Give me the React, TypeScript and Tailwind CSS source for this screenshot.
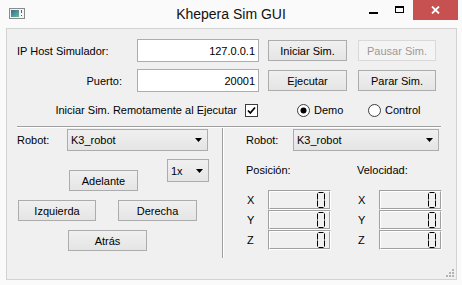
import React from 'react';

const Button = ({ label, w, disabled }: { label: string; w: string; disabled?: boolean }) => (
  <div
    className={`${w} h-[21px] shrink-0 flex items-center justify-center border ${
      disabled
        ? 'border-[#d9d9d9] bg-[#f4f4f4] text-[#9a9a9a]'
        : 'border-[#acacac] bg-linear-to-b from-[#f0f0f0] to-[#e5e5e5] text-black'
    }`}
  >
    {label}
  </div>
);

const TextInput = ({ value }: { value: string }) => (
  <div className="w-[122px] h-[23px] shrink-0 border border-[#abadb3] bg-white flex items-center justify-end pr-[3px]">
    {value}
  </div>
);

const Combo = ({ text, w, h }: { text: string; w: string; h: string }) => (
  <div
    className={`${w} ${h} shrink-0 border border-[#acacac] bg-linear-to-b from-[#f0f0f0] to-[#e5e5e5] flex items-center justify-between pl-[3px] pr-[5px]`}
  >
    <span>{text}</span>
    <svg width="7" height="4" viewBox="0 0 7 4">
      <path d="M0 0H7L3.5 4Z" fill="#000" />
    </svg>
  </div>
);

const Radio = ({ checked }: { checked?: boolean }) => (
  <svg width="13" height="13" viewBox="0 0 13 13">
    <circle cx="6.5" cy="6.5" r="6" fill="#fff" stroke="#3c3c3c" />
    {checked && <circle cx="6.5" cy="6.5" r="3" fill="#000" />}
  </svg>
);

// outline-segment "0" like QLCDNumber draws it
const LcdZero = () => (
  <svg width="8" height="16" viewBox="0 0 8 16" fill="none" stroke="#000" strokeWidth="1">
    <path d="M1.5 0.5H6.5" />
    <path d="M0.5 1.5V7.5M0.5 8.5V14.5" />
    <path d="M7.5 1.5V7.5M7.5 8.5V14.5" />
    <path d="M1.5 15.5H6.5" />
  </svg>
);

const Lcd = () => (
  <div className="w-[63px] h-[20px] border border-t-[#a0a0a0] border-l-[#a0a0a0] border-r-white border-b-white">
    <div className="h-full border border-t-white border-l-white border-r-[#a0a0a0] border-b-[#a0a0a0] flex items-center justify-end pr-[4px]">
      <LcdZero />
    </div>
  </div>
);

const LcdColumn = () => (
  <div className="flex flex-col">
    {['X', 'Y', 'Z'].map((axis) => (
      <div key={axis} className="flex items-center h-[20px]">
        <span className="w-[22px] pl-[1px]">{axis}</span>
        <Lcd />
      </div>
    ))}
  </div>
);

const App: React.FC = () => {
  return (
    <div className="w-[462px] h-[285px] bg-[#fafafa] text-black text-[11px] leading-[14px] font-['Liberation_Sans',Arial,sans-serif] flex flex-col overflow-hidden">
      {/* title bar */}
      <div className="h-[28px] grid grid-cols-[1fr_auto_1fr]">
        <div className="pl-[9px] pt-[8px]">
          <svg width="16" height="11" viewBox="0 0 16 11">
            <defs>
              <linearGradient id="ic" x1="0" y1="0" x2="1" y2="1">
                <stop offset="0" stopColor="#2f6f8f" />
                <stop offset="1" stopColor="#6fb59a" />
              </linearGradient>
            </defs>
            <rect x="0.5" y="0.5" width="15" height="10" fill="#f4f4f4" stroke="#8a8a8a" />
            <rect x="2" y="2" width="8" height="7" fill="url(#ic)" />
            <rect x="12" y="2" width="1" height="3" fill="#2f6f8f" />
            <rect x="12" y="7" width="1" height="1" fill="#555" />
          </svg>
        </div>
        <div className="pt-[6px] text-[14px] leading-[16px] text-[#111]">Khepera Sim GUI</div>
        <div className="flex justify-end items-start pr-[4px]">
          <div className="w-[26px] h-[20px] flex justify-center pt-[12px]">
            <div className="w-[9px] h-[2px] bg-black" />
          </div>
          <div className="w-[27px] h-[20px] flex justify-center pt-[6px]">
            <div className="w-[9px] h-[7px] border border-black border-t-2" />
          </div>
          <div className="w-[45px] h-[20px] bg-[#c75050] flex items-center justify-center">
            <svg width="9" height="8" viewBox="0 0 9 8">
              <path d="M1 0.5L8 7.5M8 0.5L1 7.5" stroke="#fff" strokeWidth="1.8" />
            </svg>
          </div>
        </div>
      </div>

      {/* client area */}
      <div className="relative ml-[6px] w-[451px] h-[252px] border border-[#d2d2d2] bg-[#f0f0f0] pl-[10px] pt-[10px] flex flex-col">
        <div className="flex items-center h-[23px]">
          <div className="w-[105px]">IP Host Simulador:</div>
          <div className="ml-[15px]">
            <TextInput value="127.0.0.1" />
          </div>
          <div className="ml-[9px]">
            <Button label="Iniciar Sim." w="w-[79px]" />
          </div>
          <div className="ml-[11px]">
            <Button label="Pausar Sim." w="w-[78px]" disabled />
          </div>
        </div>

        <div className="flex items-center h-[23px] mt-[7px]">
          <div className="w-[105px] text-right">Puerto:</div>
          <div className="ml-[15px]">
            <TextInput value="20001" />
          </div>
          <div className="ml-[9px]">
            <Button label="Ejecutar" w="w-[79px]" />
          </div>
          <div className="ml-[11px]">
            <Button label="Parar Sim." w="w-[78px]" />
          </div>
        </div>

        <div className="flex items-center h-[14px] mt-[11px]">
          <div className="w-[220px] text-right whitespace-nowrap">Iniciar Sim. Remotamente al Ejecutar</div>
          <svg className="ml-[8px]" width="13" height="13" viewBox="0 0 13 13">
            <rect x="0.5" y="0.5" width="12" height="12" fill="#fff" stroke="#3c3c3c" />
            <path d="M3 6.5L5.3 9L10 3.5" fill="none" stroke="#000" strokeWidth="1.8" />
          </svg>
          <div className="ml-[39px] w-[71px] flex items-center gap-[4px]">
            <Radio checked />
            <span>Demo</span>
          </div>
          <div className="flex items-center gap-[4px]">
            <Radio />
            <span>Control</span>
          </div>
        </div>

        <div className="mt-[9px] w-[424px] border-t border-b border-t-[#a0a0a0] border-b-white" />

        <div className="flex h-[130px]">
          {/* left: manual drive */}
          <div className="w-[205px] flex flex-col">
            <div className="mt-[1px] flex items-center h-[22px]">
              <span className="w-[50px]">Robot:</span>
              <Combo text="K3_robot" w="w-[141px]" h="h-[22px]" />
            </div>
            <div className="mt-[8px] flex items-start h-[32px]">
              <div className="ml-[52px] mt-[11px]">
                <Button label="Adelante" w="w-[69px]" />
              </div>
              <div className="ml-[29px]">
                <Combo text="1x" w="w-[42px]" h="h-[23px]" />
              </div>
            </div>
            <div className="mt-[9px] flex">
              <div className="ml-[1px]">
                <Button label="Izquierda" w="w-[78px]" />
              </div>
              <div className="ml-[22px]">
                <Button label="Derecha" w="w-[79px]" />
              </div>
            </div>
            <div className="mt-[9px] ml-[51px]">
              <Button label="Atrás" w="w-[79px]" />
            </div>
          </div>

          <div className="w-[2px] h-full border-l border-r border-l-[#a0a0a0] border-r-white" />

          {/* right: telemetry */}
          <div className="pl-[22px] flex flex-col">
            <div className="mt-[1px] flex items-center h-[22px]">
              <span className="w-[47px]">Robot:</span>
              <Combo text="K3_robot" w="w-[146px]" h="h-[22px]" />
            </div>
            <div className="mt-[12px] flex items-center h-[14px]">
              <span className="w-[111px]">Posición:</span>
              <span>Velocidad:</span>
            </div>
            <div className="mt-[13px] flex">
              <LcdColumn />
              <div className="ml-[26px]">
                <LcdColumn />
              </div>
            </div>
          </div>
        </div>

        <svg className="absolute right-[2px] bottom-[2px]" width="8" height="8" viewBox="0 0 8 8">
          <rect x="6" y="0" width="2" height="2" fill="#b4b4b4" />
          <rect x="3" y="3" width="2" height="2" fill="#b4b4b4" />
          <rect x="6" y="3" width="2" height="2" fill="#b4b4b4" />
          <rect x="0" y="6" width="2" height="2" fill="#b4b4b4" />
          <rect x="3" y="6" width="2" height="2" fill="#b4b4b4" />
          <rect x="6" y="6" width="2" height="2" fill="#b4b4b4" />
        </svg>
      </div>
    </div>
  );
};

export default App;
